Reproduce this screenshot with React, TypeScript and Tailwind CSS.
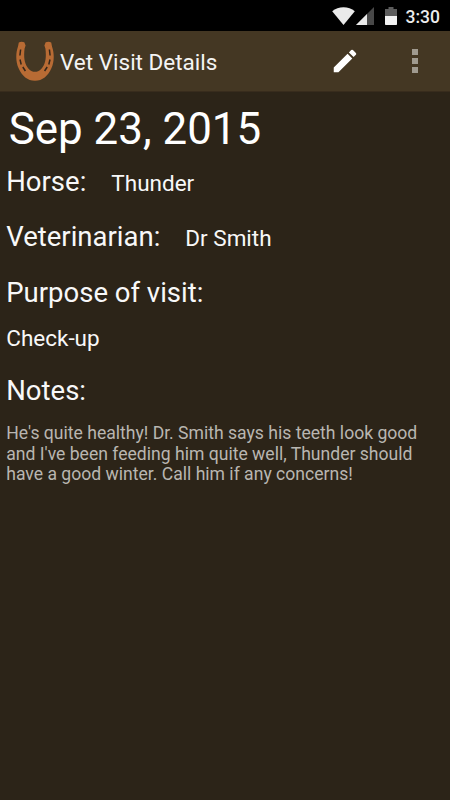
import React from 'react';

interface VetVisit {
  date: string;
  horse: string;
  veterinarian: string;
  purpose: string;
  notes: string[];
}

const VISIT: VetVisit = {
  date: 'Sep 23, 2015',
  horse: 'Thunder',
  veterinarian: 'Dr Smith',
  purpose: 'Check-up',
  notes: [
    "He's quite healthy! Dr. Smith says his teeth look good",
    "and I've been feeding him quite well, Thunder should",
    'have a good winter. Call him if any concerns!'
  ]
};

function StatusBar() {
  return (
    <div className="flex h-[31px] items-center justify-end bg-black pr-[10px]">
      {/* Wifi */}
      <svg className="h-[18px] w-[23px]" viewBox="0 0 23 18">
        <path d="M0.2 4.2C6.2-1 16.8-1 22.8 4.2L11.5 18z" fill="#eaeaea" />
      </svg>
      {/* Cell signal */}
      <svg className="ml-[1px] h-[18px] w-[18px]" viewBox="0 0 18 18">
        <path d="M18 0V18H0z" fill="#484848" />
        <path d="M11 7V18H0z" fill="#eaeaea" />
      </svg>
      {/* Battery */}
      <svg className="ml-[11px] h-[18px] w-[12px]" viewBox="0 0 12 18">
        <path d="M3.5 0h5v2H12v7H0V2h3.5z" fill="#5c5c5c" />
        <path d="M0 9h12v8.2a.8.8 0 0 1-.8.8H.8a.8.8 0 0 1-.8-.8z" fill="#f2f2f2" />
      </svg>
      <span className="ml-[9px] pt-[3px] text-[17.5px] leading-[28px] font-medium text-[#ececec]">3:30</span>
    </div>
  );
}

function HorseshoeIcon() {
  return (
    <svg className="h-[40px] w-[38px]" viewBox="0 0 38 40">
      <path
        d="M2.8 1.4Q5.4 0 8.3 1.2L9.6 4.4 8.6 7.5C8 12 7.8 18 9.4 22.2 11.4 27.6 14.6 30.8 19 30.8s7.6-3.2 9.6-8.6c1.6-4.2 1.4-10.2.8-14.7L28.4 4.4l1.3-3.2q2.9-1.2 5.5.2l.8 4.2C38.4 12.6 38.4 20.5 35.4 27.3 32 35 26.5 39.8 19 39.8S6 35 2.6 27.3C-.4 20.5-.4 12.6 2 5.6z"
        fill="#b86b34"
      />
      {/* Nail slots */}
      <path
        d="M4.6 8.5L3.9 14.5M4 18.5L5.2 23.5M6.8 26L9.4 30M33.4 8.5L34.1 14.5M34 18.5L32.8 23.5M31.2 26L28.6 30"
        fill="none"
        stroke="#33261a"
        strokeWidth="1.5"
      />
    </svg>
  );
}

function ActionBar() {
  return (
    <header className="flex h-[61px] items-center border-b border-[#382c1d] bg-[#443723] pl-[16px]">
      <HorseshoeIcon />
      <h1 className="ml-[6px] flex-1 pt-[2px] text-[22.5px] leading-[28px] text-[#f4f4f4]">Vet Visit Details</h1>
      <button className="mr-[52px]" aria-label="Edit">
        <svg className="h-[30px] w-[30px]" viewBox="0 0 24 24" fill="#ffffff">
          <path d="M3 17.25V21h3.75L17.81 9.94l-3.75-3.75L3 17.25zM20.71 7.04a1 1 0 0 0 0-1.41l-2.34-2.34a1 1 0 0 0-1.41 0l-1.83 1.83 3.75 3.75 1.83-1.83z" />
        </svg>
      </button>
      <button className="mr-[32px] flex flex-col gap-[3px]" aria-label="More options">
        <span className="h-[6px] w-[6px] bg-[#a09a8f]" />
        <span className="h-[6px] w-[6px] bg-[#a09a8f]" />
        <span className="h-[6px] w-[6px] bg-[#a09a8f]" />
      </button>
    </header>
  );
}

function Label({ children }: { children: React.ReactNode }) {
  return <span className="text-[27.5px] leading-[31px]">{children}</span>;
}

export default function App() {
  return (
    <div className="flex h-[800px] w-[450px] flex-col overflow-hidden bg-[#2c2418] font-['Roboto',sans-serif] text-[#f8f8f8]">
      <StatusBar />
      <ActionBar />

      <main className="flex flex-col pl-[6.25px] whitespace-nowrap">
        <h2 className="pl-[2.5px] text-[43.9px] leading-[74px] text-white">{VISIT.date}</h2>

        <div className="flex h-[31px] items-baseline gap-[25px]">
          <Label>Horse:</Label>
          <span className="text-[22.5px]">{VISIT.horse}</span>
        </div>
        <div className="mt-6 flex h-[31px] items-baseline gap-[25px]">
          <Label>Veterinarian:</Label>
          <span className="text-[22.5px]">{VISIT.veterinarian}</span>
        </div>

        <div className="mt-[25px] flex flex-col">
          <Label>Purpose of visit:</Label>
          <p className="mt-[17px] text-[22.5px] leading-[27px]">{VISIT.purpose}</p>
        </div>

        <div className="mt-[23px] flex flex-col">
          <Label>Notes:</Label>
          <div className="mt-[17px] text-[17.58px] leading-[20.5px] text-[#b9b6b1]">
            {VISIT.notes.map((line) => (
              <p key={line}>{line}</p>
            ))}
          </div>
        </div>
      </main>
    </div>
  );
}
